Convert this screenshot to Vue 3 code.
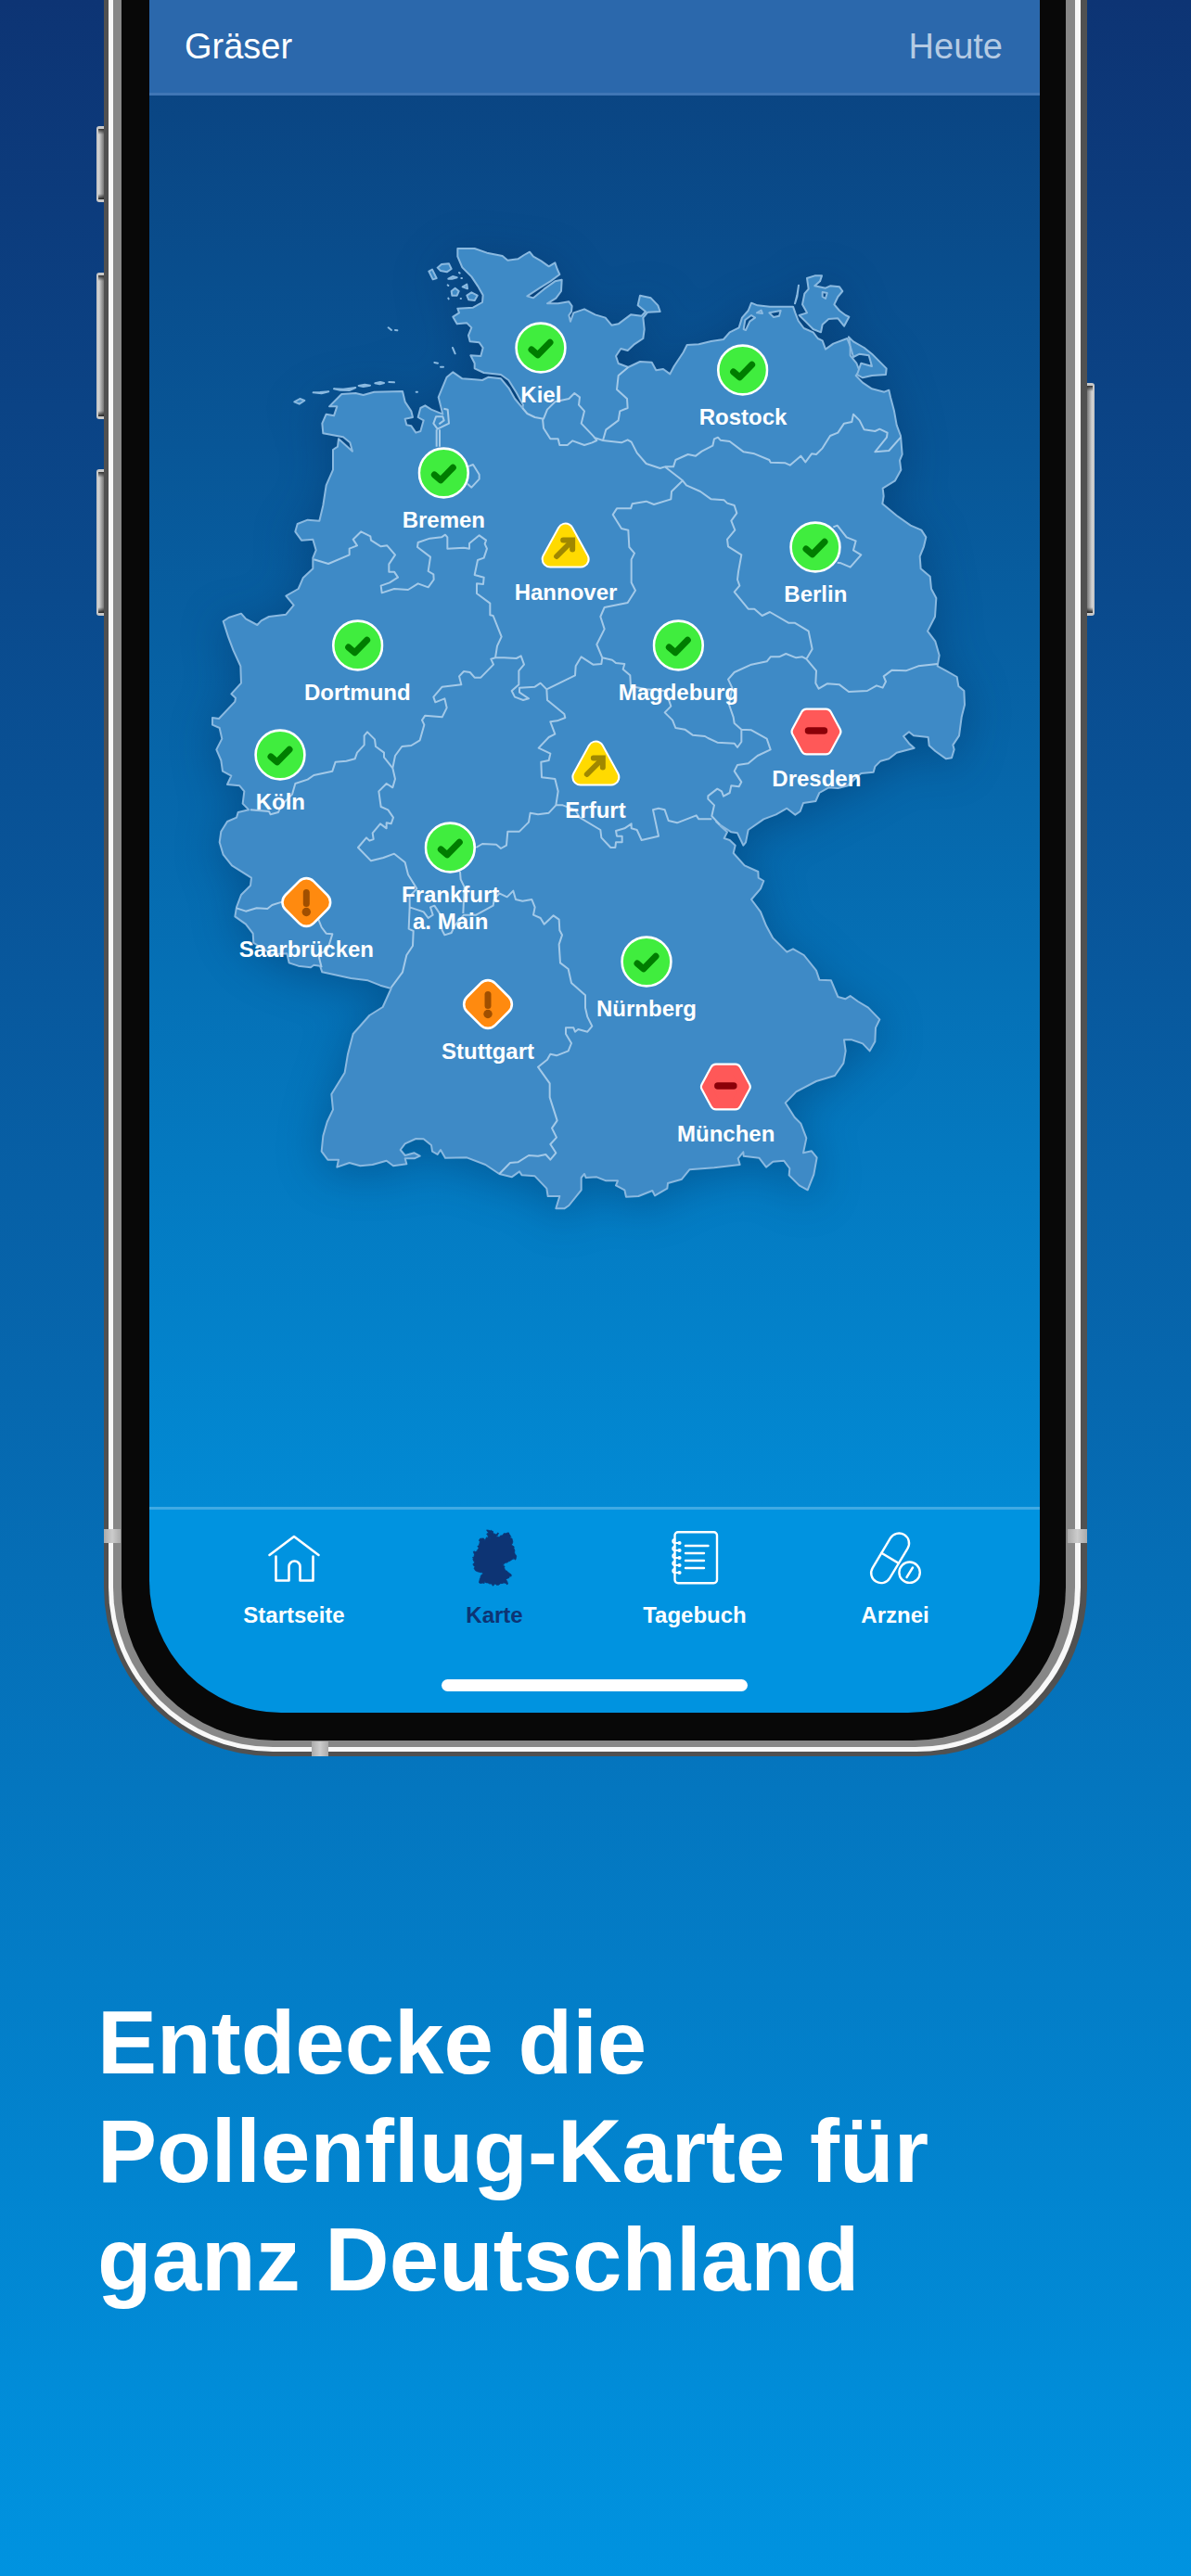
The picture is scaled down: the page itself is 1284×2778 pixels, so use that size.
<script setup>
const map = { x: -147, y: -411, w: 2880, h: 4566 }

const cities = [
  { name: 'Kiel', x: 1120, y: 404, level: 'low' },
  { name: 'Rostock', x: 1773, y: 478, level: 'low' },
  { name: 'Bremen', x: 805, y: 809, level: 'low' },
  { name: 'Hannover', x: 1200, y: 1044, level: 'rising' },
  { name: 'Berlin', x: 2008, y: 1051, level: 'low' },
  { name: 'Dortmund', x: 526, y: 1368, level: 'low' },
  { name: 'Magdeburg', x: 1564, y: 1368, level: 'low' },
  { name: 'Köln', x: 277, y: 1721, level: 'low' },
  { name: 'Dresden', x: 2011, y: 1647, level: 'high' },
  { name: 'Erfurt', x: 1296, y: 1750, level: 'rising' },
  { name: 'Frankfurt\na. Main', x: 827, y: 2021, level: 'low' },
  { name: 'Saarbrücken', x: 361, y: 2198, level: 'medium' },
  { name: 'Nürnberg', x: 1461, y: 2390, level: 'low' },
  { name: 'Stuttgart', x: 948, y: 2530, level: 'medium' },
  { name: 'München', x: 1718, y: 2795, level: 'high' }
]

const pinStyle = (city) => ({
  left: `${((city.x - map.x) / map.w) * 100}%`,
  top: `${((city.y - map.y) / map.h) * 100}%`
})

const tabs = [
  { id: 'home', label: 'Startseite' },
  { id: 'map', label: 'Karte' },
  { id: 'diary', label: 'Tagebuch' },
  { id: 'medicine', label: 'Arznei' }
]

const mainland =
  'M850 84 905 84 945 98 995 108 1012 122 1045 118 1065 105 1083 95 1095 110 1120 124 1145 142 1165 130 1172 150 1180 168 1150 190 1115 212 1075 238 1095 244 1130 215 1165 190 1187 185 1185 222 1168 245 1140 262 1175 262 1210 256 1220 270 1218 288 1210 300 1215 320 1225 292 1260 280 1295 298 1328 308 1348 332 1370 328 1410 298 1445 302 1458 288 1433 268 1440 236 1475 244 1498 268 1505 288 1465 290 1450 308 1454 345 1450 375 1420 395 1400 414 1378 408 1362 432 1370 456 1402 468 1440 450 1478 452 1492 478 1515 474 1537 490 1550 465 1580 420 1592 396 1630 394 1670 384 1710 378 1730 355 1760 340 1770 308 1790 285 1800 260 1820 268 1860 272 1900 272 1935 272 1942 292 1952 318 1970 342 2000 355 2015 375 2030 382 2040 410 2065 392 2110 375 2120 400 2120 430 2140 455 2150 480 2138 495 2160 518 2190 538 2230 548 2245 542 2250 565 2262 610 2270 655 2283 690 2288 750 2280 770 2284 800 2265 835 2225 860 2228 885 2224 910 2270 948 2315 980 2350 995 2365 1018 2358 1048 2345 1080 2348 1120 2378 1145 2382 1185 2398 1215 2394 1275 2370 1322 2395 1355 2408 1400 2402 1435 2430 1450 2465 1470 2470 1500 2488 1515 2490 1560 2480 1600 2472 1660 2452 1690 2456 1705 2448 1732 2430 1735 2395 1710 2375 1692 2372 1665 2325 1660 2310 1648 2292 1662 2310 1685 2327 1700 2270 1715 2245 1735 2218 1742 2200 1760 2195 1778 2155 1782 2135 1800 2112 1822 2080 1830 2050 1828 2020 1845 2008 1872 1968 1878 1958 1905 1942 1916 1915 1895 1880 1915 1840 1930 1790 1965 1782 2005 1774 2015 1755 1975 1735 1972 1720 1962 1698 1948 1686 1938 1700 1952 1722 1972 1712 1992 1730 1998 1748 2015 1742 2040 1778 2080 1822 2100 1823 2120 1840 2130 1830 2155 1800 2190 1830 2230 1848 2275 1870 2315 1915 2360 1935 2350 1970 2370 2010 2420 2020 2450 2058 2452 2080 2505 2104 2512 2120 2502 2145 2520 2178 2540 2215 2578 2202 2605 2200 2650 2183 2680 2160 2656 2125 2644 2100 2644 2105 2680 2098 2720 2070 2760 2010 2778 1945 2812 1910 2848 1940 2895 1960 2915 1978 2962 1968 3010 1995 3004 2012 3025 2002 3080 1982 3130 1955 3115 1922 3082 1924 3060 1905 3035 1870 3038 1848 3056 1825 3026 1775 3020 1774 3007 1757 3028 1763 3048 1680 3058 1600 3064 1575 3095 1530 3108 1528 3125 1488 3148 1480 3132 1435 3150 1395 3152 1390 3130 1362 3115 1368 3100 1330 3100 1300 3088 1265 3090 1260 3078 1250 3090 1250 3130 1210 3180 1195 3190 1168 3190 1180 3150 1142 3150 1138 3125 1100 3085 1058 3082 1050 3070 1025 3088 985 3078 940 3048 880 3025 810 3026 795 3000 785 3015 768 3005 765 2985 740 2965 715 2964 680 2980 665 3000 680 3018 710 3010 728 3020 710 3028 680 3028 685 3046 642 3052 620 3035 575 3048 535 3052 500 3042 460 3056 465 3032 430 3032 410 3005 415 2955 428 2910 447 2870 442 2820 485 2750 495 2690 512 2625 565 2565 608 2538 635 2478 600 2468 560 2452 505 2445 412 2425 405 2405 385 2402 375 2410 335 2405 305 2395 298 2365 250 2368 205 2340 190 2330 188 2300 165 2270 130 2245 135 2215 150 2175 180 2145 183 2120 120 2080 92 2045 80 2005 85 1970 105 1938 135 1925 140 1908 175 1900 155 1880 160 1840 145 1822 105 1818 118 1790 90 1775 85 1740 70 1705 88 1670 80 1635 57 1625 57 1602 78 1605 130 1550 132 1538 118 1525 150 1490 148 1435 125 1385 108 1340 92 1290 110 1278 150 1265 165 1282 202 1302 215 1288 240 1275 295 1268 320 1238 295 1208 335 1185 350 1150 382 1120 382 1085 392 1060 382 1025 345 1028 325 1000 332 975 365 962 403 965 415 915 425 850 447 800 447 735 462 725 465 700 510 740 502 712 480 694 415 682 412 650 425 620 450 625 460 595 435 595 475 555 520 552 545 558 580 548 672 546 680 580 700 610 705 630 680 635 685 655 700 658 715 680 730 675 740 640 722 630 730 600 745 592 765 605 802 620 788 565 815 500 835 484 865 505 905 508 930 510 950 500 990 505 1015 535 1035 570 1060 600 1062 590 1040 550 1015 510 990 492 935 486 905 472 905 455 892 430 925 432 932 405 920 388 890 385 885 365 895 340 880 325 848 328 835 305 855 292 850 278 900 275 930 258 932 235 915 205 895 175 865 145 850 110Z'

const lagoons =
  'M1775 345 1780 315 1800 300 1812 308 1795 320 1782 348ZM1818 292 1832 284 1836 294ZM1858 292 1895 285 1890 302 1872 306Z'

const islands =
  'M1980 180 2005 172 2028 172 2022 190 2005 205 2040 212 2055 205 2085 208 2095 222 2080 240 2068 265 2085 285 2105 300 2116 305 2100 335 2080 310 2050 312 2030 330 2025 355 2000 345 1975 320 1955 300 1980 292 1965 265 1972 230 1985 215ZM1953 203 1948 235 1941 262 1948 240ZM2030 225 2045 228 2040 246 2030 240ZM2115 370 2130 385 2165 405 2190 425 2237 472 2235 492 2190 495 2160 502 2142 492 2155 455 2190 465 2180 430 2150 425 2130 435 2120 400ZM785 146 798 135 822 133 830 150 815 160 795 156ZM757 158 768 152 782 180 770 184ZM830 222 842 212 854 222 848 236 832 236ZM880 236 895 226 914 236 905 252 886 250ZM866 208 880 200 882 214ZM820 182 834 174 848 178 832 182ZM322 580 340 570 355 576 338 587ZM383 550 405 549 433 547 410 553ZM450 538 480 539 520 534 500 543 470 542ZM530 528 550 524 567 527 545 531ZM583 520 600 516 612 519 598 523ZM628 516 645 517ZM626 340 636 348ZM648 348 655 349ZM834 405 842 424ZM775 453 786 455ZM795 467 804 467ZM716 548 720 548ZM818 202 820 204ZM855 162 857 164ZM862 180 864 180ZM820 245 821 247ZM860 246 861 246Z'

const borders =
  'M385 1090 432 1104 500 1075 500 1055 525 1045 512 1025 538 1000 568 1015 570 1028 602 1048 622 1045 648 1075 628 1105 628 1130 645 1130 657 1148 630 1165 602 1175 605 1198 645 1185 690 1188 722 1168 755 1180 773 1155 772 1138 755 1128 762 1082 720 1050 722 1035 760 1022 798 1018 810 1010 817 1018 817 1055 870 1052 888 1055 888 1038 920 1012 942 1028 938 1040 945 1055 935 1085 915 1092 905 1140 935 1148 933 1170 912 1168 912 1200 955 1232 955 1270 965 1272 980 1310 992 1340 978 1370 972 1408' +
  'M972 1408 958 1412 966 1430 925 1472 905 1472 890 1455 870 1452 855 1468 862 1495 800 1502 772 1535 778 1552 808 1540 815 1570 800 1600 745 1595 735 1610 742 1625 728 1675 700 1692 670 1695 648 1725 640 1765' +
  'M972 1408 1000 1408 1040 1410 1055 1402 1065 1430 1048 1450 1048 1495 1025 1515 1035 1535 1062 1545 1080 1540 1050 1520 1050 1505 1100 1502 1118 1490 1138 1510 1230 1465 1232 1435 1250 1405 1288 1430 1315 1428 1318 1408' +
  'M1318 1408 1300 1365 1325 1315 1312 1275 1325 1245 1400 1230 1425 1190 1412 1165 1412 1090 1422 1070 1405 1050 1402 995 1380 990 1352 945 1365 925 1410 925 1415 910 1460 902 1485 912 1540 895 1542 870 1578 835 1520 790' +
  'M1520 790 1548 790 1555 768 1595 750 1620 755 1640 740 1675 722 1680 700 1692 695 1700 704 1730 708 1775 742 1810 748 1858 768 1862 776 1910 778 1925 785 1960 755 1975 775 1995 748 2010 750 2030 730 2055 690 2080 680 2100 650 2125 645 2130 620 2150 640 2165 670 2200 675 2215 668 2240 680 2238 695 2200 742 2245 738 2283 695' +
  'M1060 600 1075 618 1100 630 1128 635 1140 605 1165 580 1210 570 1228 552 1245 565 1242 590 1260 610 1250 650 1290 692 1300 705 1285 712 1260 720 1222 706 1205 720 1180 720 1175 700 1150 700 1128 665 1125 635' +
  'M1402 468 1370 495 1365 540 1398 570 1400 600 1375 610 1370 640 1330 670 1320 705M1290 695 1320 705 1380 712 1400 703 1412 710 1430 745 1460 780 1505 795 1520 790' +
  'M1578 835 1590 850 1635 870 1670 895 1712 898 1722 908 1745 915 1753 940 1735 965 1747 995 1722 1025 1725 1048 1768 1075 1758 1130 1755 1155 1762 1175 1745 1195 1790 1250 1810 1250 1835 1272 1860 1260 1920 1295 1940 1295 1985 1322 1997 1380 1978 1412' +
  'M1978 1412 2010 1450 2008 1490 2018 1508 2045 1492 2085 1495 2115 1518 2175 1515 2205 1498 2225 1505 2235 1485 2228 1468 2255 1448 2300 1450 2340 1435 2402 1428' +
  'M1978 1412 1965 1405 1945 1408 1912 1395 1890 1405 1862 1405 1850 1420 1800 1430 1745 1455 1725 1478 1738 1505 1728 1560 1742 1600 1745 1620 1768 1640' +
  'M1318 1408 1350 1415 1362 1425 1390 1428 1385 1445 1408 1465 1410 1500 1460 1510 1520 1515 1535 1550 1540 1565 1520 1585 1545 1610 1555 1635 1585 1640 1610 1658 1650 1662 1660 1668 1690 1682 1745 1685 1755 1698 1768 1680 1768 1640' +
  'M1768 1640 1800 1642 1850 1670 1862 1705 1820 1725 1790 1750 1755 1755 1745 1775 1768 1810 1760 1825 1735 1822 1730 1845 1710 1856 1704 1840 1690 1832 1660 1855 1660 1865 1680 1885 1672 1920 1698 1948' +
  'M1672 1930 1630 1930 1622 1918 1560 1942 1532 1935 1520 1900 1500 1895 1482 1900 1500 1985 1445 1998 1430 1965 1412 1960 1412 1945 1390 1960 1362 1968 1365 1985 1382 1985 1382 2005 1362 2005 1360 2022 1345 2022 1315 1990 1312 1965 1245 1925 1230 1900 1190 1885 1168 1885' +
  'M1138 1510 1140 1545 1195 1590 1198 1602 1172 1612 1150 1615 1165 1655 1145 1665 1112 1700 1150 1718 1145 1740 1120 1745 1122 1795 1165 1800 1175 1840 1168 1885 1145 1910 1110 1915 1085 1910 1080 1940 1050 1970 1012 1970 1008 2015 990 2025 975 2012 930 2010 910 2022' +
  'M858 2100 860 2125 872 2150 868 2235' +
  'M640 1765 648 1800 640 1828 620 1815 595 1840 602 1890 625 1900 642 1925 635 1945 620 1942 620 1960 600 1945 575 1975 578 1995 565 2000 555 1990 528 2022 570 2065 610 2055 645 2042 680 2070 690 2110 718 2155 695 2180 695 2215' +
  'M695 2215 740 2230 755 2250 770 2240 762 2215 775 2210 795 2240 800 2290 808 2305 830 2298 840 2275 870 2240 910 2240 965 2210 968 2190M695 2215 692 2285 707 2292 705 2340 685 2370 672 2425 635 2475' +
  'M968 2190 985 2170 1010 2182 1030 2162 1038 2190 1060 2195 1090 2190 1100 2215 1095 2240 1118 2250 1130 2270 1160 2242 1178 2255 1180 2290 1188 2305 1178 2335 1182 2395 1208 2415 1218 2460 1263 2500 1263 2540 1270 2570 1285 2600 1270 2618 1240 2610 1230 2618 1225 2605 1200 2605 1200 2625 1218 2655 1208 2680 1170 2695 1150 2690 1140 2708 1110 2732 1148 2785 1148 2830 1172 2905 1155 2930 1170 2960 1150 2982 1168 3010 1150 3032 1135 3015 1110 3020 1080 3018 1045 3040 1020 3042 985 3078' +
  'M640 1765 612 1730 612 1715 585 1695 582 1672 558 1648 548 1660 548 1690 525 1715 518 1735 490 1742 455 1745 445 1775 385 1788 365 1802 325 1815 315 1850 280 1885 270 1908 245 1915 240 1905 180 1900' +
  'M135 2218 165 2228 200 2218 235 2220 250 2208 282 2198M400 2255 410 2280 425 2300 445 2302 430 2350 400 2370 410 2410' +
  'M2065 985 2078 980 2108 1018 2138 1030 2130 1060 2155 1075 2120 1115 2090 1102 2078 1100M882 790 900 783 920 815 920 830 895 857 882 845M805 602 818 605 822 650 785 668 772 650 780 628 802 628 806 640 790 652M782 670 782 725M792 670 792 725'
</script>

<template>
  <main class="page">
    <div class="phone">
      <span class="key key-action"></span>
      <span class="key key-up"></span>
      <span class="key key-down"></span>
      <span class="key key-power"></span>
      <div class="frame">
        <div class="rim">
          <div class="band">
            <div class="bezel">
              <div class="screen">
                <header class="topbar">
                  <button type="button" class="pollen">Gräser</button>
                  <button type="button" class="day">Heute</button>
                </header>

                <section class="map" aria-label="Pollenflug-Karte">
                  <svg class="land" :viewBox="`${map.x} ${map.y} ${map.w} ${map.h}`" aria-hidden="true">
                    <path class="ground" fill-rule="evenodd" :d="mainland + lagoons" />
                    <path class="ground" fill-rule="evenodd" :d="islands" />
                    <path class="border" :d="borders" />
                  </svg>
                  <ul class="pins">
                    <li v-for="city in cities" :key="city.name" class="pin" :style="pinStyle(city)">
                      <svg class="mark" viewBox="-28 -28 56 56" aria-hidden="true">
                        <template v-if="city.level === 'low'">
                          <circle r="26.4" fill="#40ed3e" stroke="#fff" stroke-width="2.6" />
                          <path d="M-10 2 -3.2 7.8 10 -5.8" fill="none" stroke="#007d00" stroke-width="7" stroke-linecap="round" stroke-linejoin="round" />
                        </template>
                        <template v-else-if="city.level === 'rising'">
                          <path d="M0 -15 16.5 15H-16.5Z" fill="#fff" stroke="#fff" stroke-width="19" stroke-linejoin="round" />
                          <path d="M0 -15 16.5 15H-16.5Z" fill="#ffda00" stroke="#ffda00" stroke-width="15" stroke-linejoin="round" />
                          <path d="M-9.5 12 5 -2.5" fill="none" stroke="#a08800" stroke-width="6" stroke-linecap="round" />
                          <path d="M-2.5 -5.5H7.5V4.5" fill="none" stroke="#a08800" stroke-width="6" stroke-linecap="round" />
                        </template>
                        <template v-else-if="city.level === 'medium'">
                          <rect x="-21.5" y="-21.5" width="43" height="43" rx="11" transform="rotate(45)" fill="#ff8a0f" stroke="#fff" stroke-width="2.6" />
                          <path d="M0 -10.5V1.5" stroke="#a04f00" stroke-width="7" stroke-linecap="round" />
                          <circle cy="10.5" r="4.7" fill="#a04f00" />
                        </template>
                        <template v-else>
                          <path d="M20.5 0 10.5 -18.5H-10.5L-20.5 0 -10.5 18.5H10.5Z" fill="#fff" stroke="#fff" stroke-width="14" stroke-linejoin="round" />
                          <path d="M20.5 0 10.5 -18.5H-10.5L-20.5 0 -10.5 18.5H10.5Z" fill="#ff5858" stroke="#ff5858" stroke-width="9.6" stroke-linejoin="round" />
                          <path d="M-8.5 -1H8.5" stroke="#8b0008" stroke-width="7.5" stroke-linecap="round" />
                        </template>
                      </svg>
                      <span class="city">{{ city.name }}</span>
                    </li>
                  </ul>
                </section>

                <nav class="tabs">
                  <a v-for="tab in tabs" :key="tab.id" href="#" class="tab" :class="{ active: tab.id === 'map' }">
                    <svg class="glyph" viewBox="0 0 64 64" aria-hidden="true">
                      <g v-if="tab.id === 'home'" stroke-width="2.6">
                        <path d="M5.5 29 32 9 58.5 29" />
                        <path d="M12.5 30.500V56.500H26.500V41.500a6 6 0 0 1 12 0V56.500H52.500V30.500" />
                      </g>
                      <g v-else-if="tab.id === 'map'" transform="translate(7.6 .5) scale(.0193)">
                        <path :d="mainland" fill="currentColor" stroke-width="45" />
                        <path d="M1900 290 1990 210 2090 220 2110 300 2230 480 2000 400Z" fill="currentColor" />
                      </g>
                      <g v-else-if="tab.id === 'diary'" stroke-width="2.4">
                        <rect x="10.500" y="4.300" width="45.500" height="55" rx="3.500" />
                        <path d="M22 19H46.500M22 27H42M22 35H42M22 43H42" />
                        <g v-for="n in 5" :key="n" :transform="`translate(0 ${n * 8 + 8})`">
                          <path d="M15.500 0H10.500C7.500 0 7.500 -4 10.500 -4" stroke-width="2" />
                          <circle cx="15.500" cy="0" r="2.100" fill="currentColor" stroke="none" />
                        </g>
                      </g>
                      <g v-else stroke-width="2.4">
                        <g transform="translate(26.600 32.300) rotate(31)">
                          <rect x="-10.800" y="-29.500" width="21.600" height="59" rx="10.800" />
                          <path d="M-10.800 0H10.800" />
                        </g>
                        <circle cx="47.600" cy="47.700" r="11.200" />
                        <path d="M51 42.500 44.500 53" />
                      </g>
                    </svg>
                    <span>{{ tab.label }}</span>
                  </a>
                </nav>
                <div class="indicator"></div>
              </div>
            </div>
          </div>
        </div>
      </div>
      <span class="antenna antenna-left"></span>
      <span class="antenna antenna-right"></span>
      <span class="antenna antenna-bottom"></span>
    </div>

    <h1 class="claim">Entdecke die<br />Pollenflug-Karte für<br />ganz Deutschland</h1>
  </main>
</template>

<style>
body {
  margin: 0;
}
</style>

<style scoped>
.page {
  box-sizing: border-box;
  min-height: 100vh;
  padding-bottom: 100px;
  background: linear-gradient(#0d3474, #0093e0);
  color: #fff;
  font-family: "Liberation Sans", Arial, sans-serif;
}

.phone {
  position: relative;
  margin: 0 112px;
}

.frame {
  padding: 0 7px 5px 5px;
  border-radius: 0 0 182px 182px;
  background: #515151;
}

.rim {
  padding: 0 6px 5px 5px;
  border-radius: 0 0 177px 177px;
  background: #f8f8f8;
}

.band {
  padding: 0 10px 7px 9px;
  border-radius: 0 0 172px 172px;
  background: #878787;
}

.bezel {
  padding: 0 28px 30px 30px;
  border-radius: 0 0 165px 165px;
  background: #080808;
}

.screen {
  overflow: hidden;
  border-radius: 0 0 142px 142px;
  background: #0093e0;
}

.key {
  position: absolute;
  left: -8px;
  box-sizing: border-box;
  width: 8px;
  border: solid #c8c8c8;
  border-width: 3px 0 3px 2px;
  border-radius: 3px 0 0 3px;
  background: linear-gradient(#333, transparent 6px calc(100% - 6px), #222), linear-gradient(90deg, #ddd, #777);
}

.key-action {
  top: 136px;
  height: 82px;
}

.key-up {
  top: 294px;
  height: 158px;
}

.key-down {
  top: 506px;
  height: 158px;
}

.key-power {
  top: 413px;
  right: -8px;
  left: auto;
  height: 251px;
  border-width: 3px 2px 3px 0;
  border-radius: 0 3px 3px 0;
  background: linear-gradient(#333, transparent 6px calc(100% - 6px), #222), linear-gradient(90deg, #777, #ddd);
}

.antenna {
  position: absolute;
  background: linear-gradient(90deg, #aaa, #ccc, #aaa);
}

.antenna-left,
.antenna-right {
  bottom: 230px;
  width: 18px;
  height: 15px;
}

.antenna-left {
  left: 0;
}

.antenna-right {
  right: 0;
  width: 21px;
}

.antenna-bottom {
  bottom: 0;
  left: 224px;
  width: 18px;
  height: 16px;
}

.topbar {
  display: flex;
  align-items: center;
  justify-content: space-between;
  padding: 28px 40px 28px 38px;
  border-bottom: 3px solid #4076b5;
  background: #2b68ac;
}

.pollen,
.day {
  padding: 0;
  border: 0;
  background: none;
  color: #fff;
  font: 38px/44px "Liberation Sans", Arial, sans-serif;
}

.day {
  color: #b5cbe3;
}

.map {
  position: relative;
  aspect-ratio: 960 / 1522;
  background: linear-gradient(#0a4583, #028ad4);
}

.land {
  display: block;
  width: 100%;
  height: 100%;
  filter: drop-shadow(0 8px 24px rgba(0, 30, 70, 0.32));
}

.ground {
  fill: #3e8ac6;
  stroke: #8ab9e0;
  stroke-width: 6;
  stroke-linejoin: round;
}

.border {
  fill: none;
  stroke: #a3c9e8;
  stroke-width: 6;
  stroke-linejoin: round;
}

.pins {
  margin: 0;
  padding: 0;
  list-style: none;
}

.pin {
  position: absolute;
  display: flex;
  flex-direction: column;
  align-items: center;
  gap: 8px;
  margin-top: -28px;
  transform: translateX(-50%);
}

.mark {
  width: 56px;
  height: 56px;
}

.city {
  font-size: 24px;
  font-weight: 700;
  line-height: 29px;
  text-align: center;
  white-space: pre;
}

.tabs {
  display: flex;
  padding: 20px 48px 0;
  border-top: 3px solid #40aae3;
}

.tab {
  display: flex;
  flex: 1;
  flex-direction: column;
  align-items: center;
  gap: 16px;
  color: #fff;
  font-size: 24px;
  font-weight: 700;
  line-height: 28px;
  text-decoration: none;
}

.tab.active {
  color: #0d3474;
}

.glyph {
  width: 64px;
  height: 64px;
  fill: none;
  stroke: currentColor;
  stroke-linecap: round;
  stroke-linejoin: round;
}

.indicator {
  width: 330px;
  height: 13px;
  margin: 55px auto 23px;
  border-radius: 7px;
  background: #fff;
}

.claim {
  margin: 250px 105px 0;
  font-size: 96px;
  font-weight: 700;
  line-height: 117px;
}
</style>
